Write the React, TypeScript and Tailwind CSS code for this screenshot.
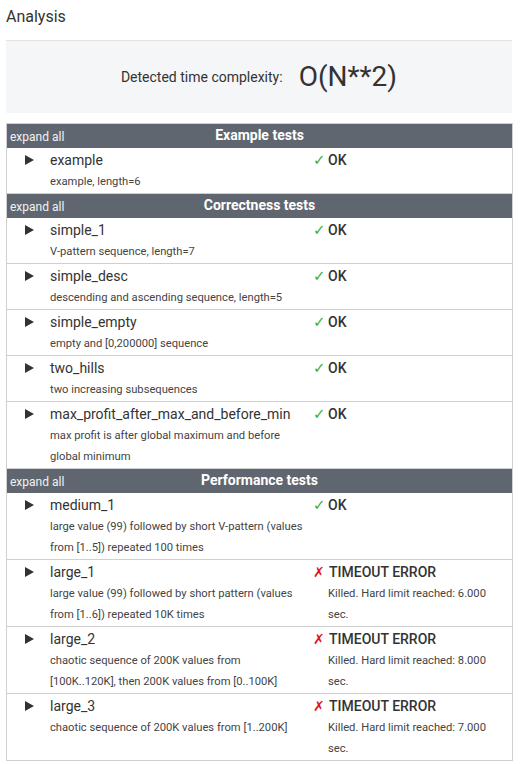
import React from 'react';

type Test = {
  name: string;
  desc: string;
  ok: boolean;
  msg?: string;
};

const groups: { title: string; tests: Test[] }[] = [
  {
    title: "Example tests",
    tests: [{ name: "example", desc: "example, length=6", ok: true }],
  },
  {
    title: "Correctness tests",
    tests: [
      { name: "simple_1", desc: "V-pattern sequence, length=7", ok: true },
      { name: "simple_desc", desc: "descending and ascending sequence, length=5", ok: true },
      { name: "simple_empty", desc: "empty and [0,200000] sequence", ok: true },
      { name: "two_hills", desc: "two increasing subsequences", ok: true },
      {
        name: "max_profit_after_max_and_before_min",
        desc: "max profit is after global maximum and before global minimum",
        ok: true,
      },
    ],
  },
  {
    title: "Performance tests",
    tests: [
      {
        name: "medium_1",
        desc: "large value (99) followed by short V-pattern (values from [1..5]) repeated 100 times",
        ok: true,
      },
      {
        name: "large_1",
        desc: "large value (99) followed by short pattern (values from [1..6]) repeated 10K times",
        ok: false,
        msg: "Killed. Hard limit reached: 6.000 sec.",
      },
      {
        name: "large_2",
        desc: "chaotic sequence of 200K values from [100K..120K], then 200K values from [0..100K]",
        ok: false,
        msg: "Killed. Hard limit reached: 8.000 sec.",
      },
      {
        name: "large_3",
        desc: "chaotic sequence of 200K values from [1..200K]",
        ok: false,
        msg: "Killed. Hard limit reached: 7.000 sec.",
      },
    ],
  },
];

function Row({ t }: { t: Test }) {
  return (
    <div className="grid grid-cols-[43px_263px_1fr] border-b border-[#d0d0d0] pt-[1px] pb-[1px]">
      <div className="flex justify-center pt-[6px] pl-[2px]">
        {/* collapsed row arrow */}
        <svg width="9" height="10" viewBox="0 0 9 10">
          <polygon points="0,0 9,5 0,10" fill="#333" />
        </svg>
      </div>
      <div className="pr-[6px]">
        <div className="text-[14px] leading-[22px] text-[#333]">{t.name}</div>
        <div className="text-[11.2px] leading-[21px] text-[#444]">{t.desc}</div>
      </div>
      <div className="pr-[10px]">
        <div className="flex items-center text-[14px] leading-[22px] font-medium text-[#333]">
          {t.ok ? (
            <span className="w-[15px] text-[15px] font-normal text-[#3cb034] font-['DejaVu_Sans',sans-serif]">✓</span>
          ) : (
            <span className="w-[16px] text-[14px] font-normal text-[#e0141e] font-['DejaVu_Sans',sans-serif]">✗</span>
          )}
          {t.ok ? "OK" : "TIMEOUT ERROR"}
        </div>
        {t.msg && (
          <div className="pl-[15px] pr-[6px] text-[11.2px] leading-[21px] text-[#444]">{t.msg}</div>
        )}
      </div>
    </div>
  );
}

export default function App() {
  return (
    <div className="bg-white min-h-screen font-['Roboto',sans-serif] px-[6px] pb-[4px]">
      <h1 className="pt-[5px] text-[16px] leading-[24px] text-[#333] font-normal">Analysis</h1>

      <div className="mt-[11px] w-[506px] h-[73px] bg-[#f5f6f8] border-t border-[#e2e2e2] flex items-center justify-center gap-[16px]">
        <span className="text-[14px] text-[#333]">Detected time complexity:</span>
        <span className="text-[28px] text-[#333] leading-none">O(N**2)</span>
      </div>

      <div className="mt-[10px] w-[507px] border-x border-t border-[#d0d0d0]">
        {groups.map((g) => (
          <div key={g.title}>
            <div className="grid grid-cols-[1fr_auto_1fr] h-[24px] bg-[#5f6670] text-white">
              <span className="pl-[3px] pt-[4px] text-[12px] leading-[18px] text-[#f2f2f2]">expand all</span>
              <span className="text-[14px] leading-[22px] font-bold">{g.title}</span>
              <span />
            </div>
            {g.tests.map((t) => (
              <Row key={t.name} t={t} />
            ))}
          </div>
        ))}
      </div>
    </div>
  );
}
